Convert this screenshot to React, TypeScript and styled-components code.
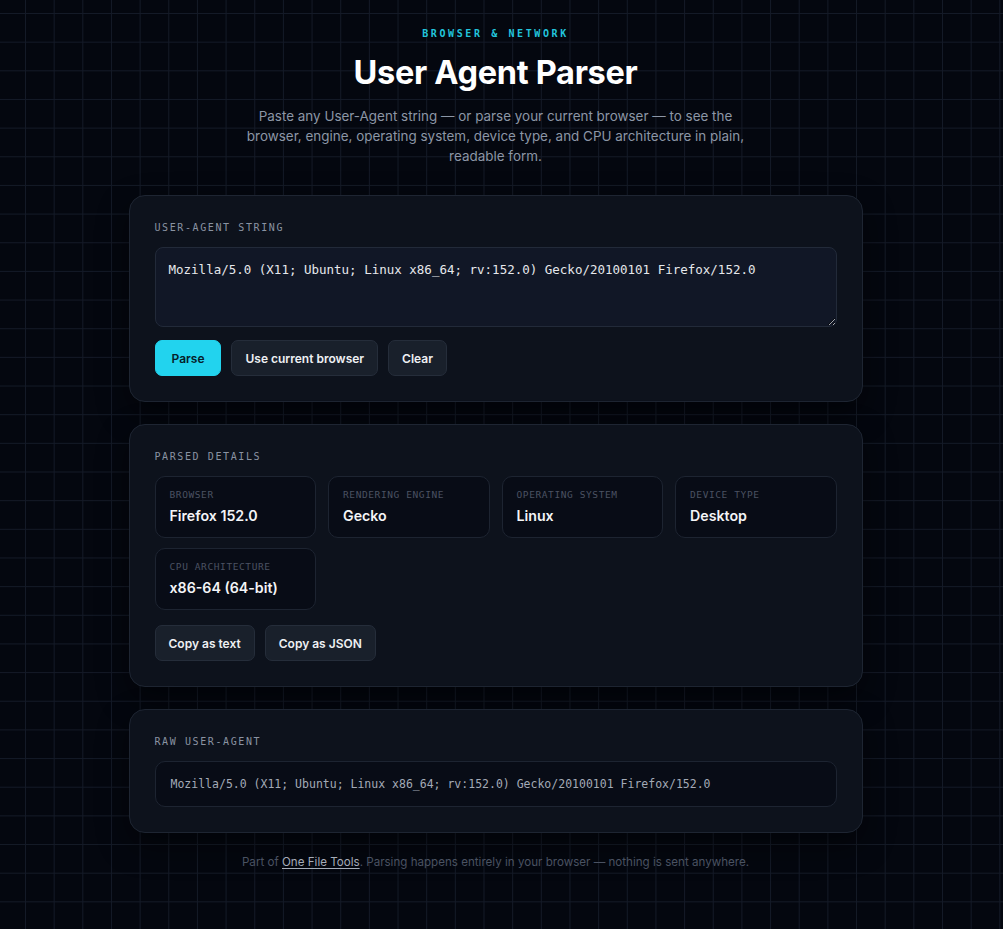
import React from 'react';
import styled, { createGlobalStyle } from 'styled-components';

const sans = `Inter, 'Noto Sans', 'Liberation Sans', sans-serif`;
const mono = `'DejaVu Sans Mono', 'Liberation Mono', monospace`;

const GlobalStyle = createGlobalStyle`
  * {
    box-sizing: border-box;
  }

  html, body {
    margin: 0;
    padding: 0;
    min-height: 100%;
  }

  body {
    background-color: #04070f;
    background-image:
      linear-gradient(to right, #141a27 1px, transparent 1px),
      linear-gradient(to bottom, #141a27 1px, transparent 1px);
    background-size: 28.67px 28.67px;
    background-position: 25px 13px;
    font-family: ${sans};
    color: #e5e7eb;
  }
`;

const Page = styled.main`
  min-height: 929px;
  padding: 27px 28px 40px 16px;
  display: flex;
  flex-direction: column;
  align-items: center;
`;

const Header = styled.header`
  display: flex;
  flex-direction: column;
  align-items: center;
  text-align: center;
  margin-bottom: 29px;
`;

const Eyebrow = styled.div`
  font-family: ${mono};
  font-size: 10px;
  line-height: 14px;
  font-weight: 600;
  letter-spacing: 2.6px;
  color: #22c4dc;
  text-transform: uppercase;
  margin-bottom: 13px;
`;

const Title = styled.h1`
  margin: 0 0 14px;
  font-family: ${sans};
  font-size: 32.5px;
  line-height: 38px;
  font-weight: 700;
  letter-spacing: -0.3px;
  color: #ffffff;
`;

const Lead = styled.p`
  margin: 0;
  max-width: 505px;
  font-size: 13.45px;
  line-height: 20px;
  color: #8c96a6;
`;

const Stack = styled.div`
  width: 734px;
  display: flex;
  flex-direction: column;
  gap: 22px;
`;

const Card = styled.section`
  background: #0d121c;
  border: 1px solid #1e2532;
  border-radius: 16px;
  padding: 25px;
  box-shadow: 0 12px 32px rgba(0, 0, 0, 0.45);
`;

const CardLabel = styled.h2`
  margin: 0 0 12px;
  font-family: ${mono};
  font-size: 10px;
  line-height: 14px;
  font-weight: 500;
  letter-spacing: 1.6px;
  color: #8a93a2;
  text-transform: uppercase;
`;

const Input = styled.textarea`
  display: block;
  width: 100%;
  height: 80px;
  padding: 13px 13px;
  background: #111726;
  border: 1px solid #222a39;
  border-radius: 8px;
  color: #e6e8ec;
  font-family: ${mono};
  font-size: 12.5px;
  line-height: 18px;
  resize: vertical;
  outline: none;
`;

const Actions = styled.div<{ $top: number }>`
  display: flex;
  gap: 10px;
  margin-top: ${(p) => p.$top}px;
`;

const Button = styled.button<{ $primary?: boolean }>`
  height: 36px;
  padding: 0 ${(p) => (p.$primary ? 16 : 13)}px;
  border-radius: 7px;
  border: 1px solid ${(p) => (p.$primary ? '#22d3ee' : '#252d3a')};
  background: ${(p) => (p.$primary ? '#22d3ee' : '#19202b')};
  color: ${(p) => (p.$primary ? '#06202a' : '#eef0f3')};
  font-family: ${sans};
  font-size: 12px;
  font-weight: 600;
  cursor: pointer;
`;

const DetailGrid = styled.div`
  display: grid;
  grid-template-columns: repeat(4, 1fr);
  column-gap: 12px;
  row-gap: 10px;
`;

const Detail = styled.div`
  background: #080c16;
  border: 1px solid #1d2431;
  border-radius: 10px;
  padding: 11px 14px;
  display: flex;
  flex-direction: column;
  gap: 4px;
`;

const DetailName = styled.span`
  font-family: ${mono};
  font-size: 9.5px;
  line-height: 14px;
  letter-spacing: 0.6px;
  color: #4b5262;
  text-transform: uppercase;
`;

const DetailValue = styled.span`
  font-size: 14.2px;
  line-height: 20px;
  font-weight: 600;
  color: #f4f5f7;
`;

const RawBox = styled.div`
  background: #080c16;
  border: 1px solid #1d2431;
  border-radius: 10px;
  padding: 14px 15px;
  font-family: ${mono};
  font-size: 11.5px;
  line-height: 16px;
  color: #a3aab6;
  white-space: nowrap;
  overflow: hidden;
`;

const Footer = styled.footer`
  margin-top: 21px;
  font-size: 11.6px;
  line-height: 16px;
  color: #4a5262;
  text-align: center;

  a {
    color: #a5acb8;
    text-decoration: underline;
    text-underline-offset: 2px;
  }
`;

const UA = 'Mozilla/5.0 (X11; Ubuntu; Linux x86_64; rv:152.0) Gecko/20100101 Firefox/152.0';

const details = [
  { name: 'Browser', value: 'Firefox 152.0' },
  { name: 'Rendering engine', value: 'Gecko' },
  { name: 'Operating system', value: 'Linux' },
  { name: 'Device type', value: 'Desktop' },
  { name: 'CPU architecture', value: 'x86-64 (64-bit)' },
];

const App: React.FC = () => {
  return (
    <>
      <GlobalStyle />
      <Page>
        <Header>
          <Eyebrow>Browser &amp; Network</Eyebrow>
          <Title>User Agent Parser</Title>
          <Lead>
            Paste any User-Agent string — or parse your current browser — to see the
            browser, engine, operating system, device type, and CPU architecture in plain,
            readable form.
          </Lead>
        </Header>

        <Stack>
          <Card>
            <CardLabel>User-Agent string</CardLabel>
            <Input defaultValue={UA} spellCheck={false} />
            <Actions $top={13}>
              <Button $primary>Parse</Button>
              <Button>Use current browser</Button>
              <Button>Clear</Button>
            </Actions>
          </Card>

          <Card>
            <CardLabel>Parsed details</CardLabel>
            <DetailGrid>
              {details.map((d) => (
                <Detail key={d.name}>
                  <DetailName>{d.name}</DetailName>
                  <DetailValue>{d.value}</DetailValue>
                </Detail>
              ))}
            </DetailGrid>
            <Actions $top={15}>
              <Button>Copy as text</Button>
              <Button>Copy as JSON</Button>
            </Actions>
          </Card>

          <Card>
            <CardLabel>Raw User-Agent</CardLabel>
            <RawBox>{UA}</RawBox>
          </Card>
        </Stack>

        <Footer>
          Part of <a href="#">One File Tools</a>. Parsing happens entirely in your browser — nothing is sent anywhere.
        </Footer>
      </Page>
    </>
  );
};

export default App;
